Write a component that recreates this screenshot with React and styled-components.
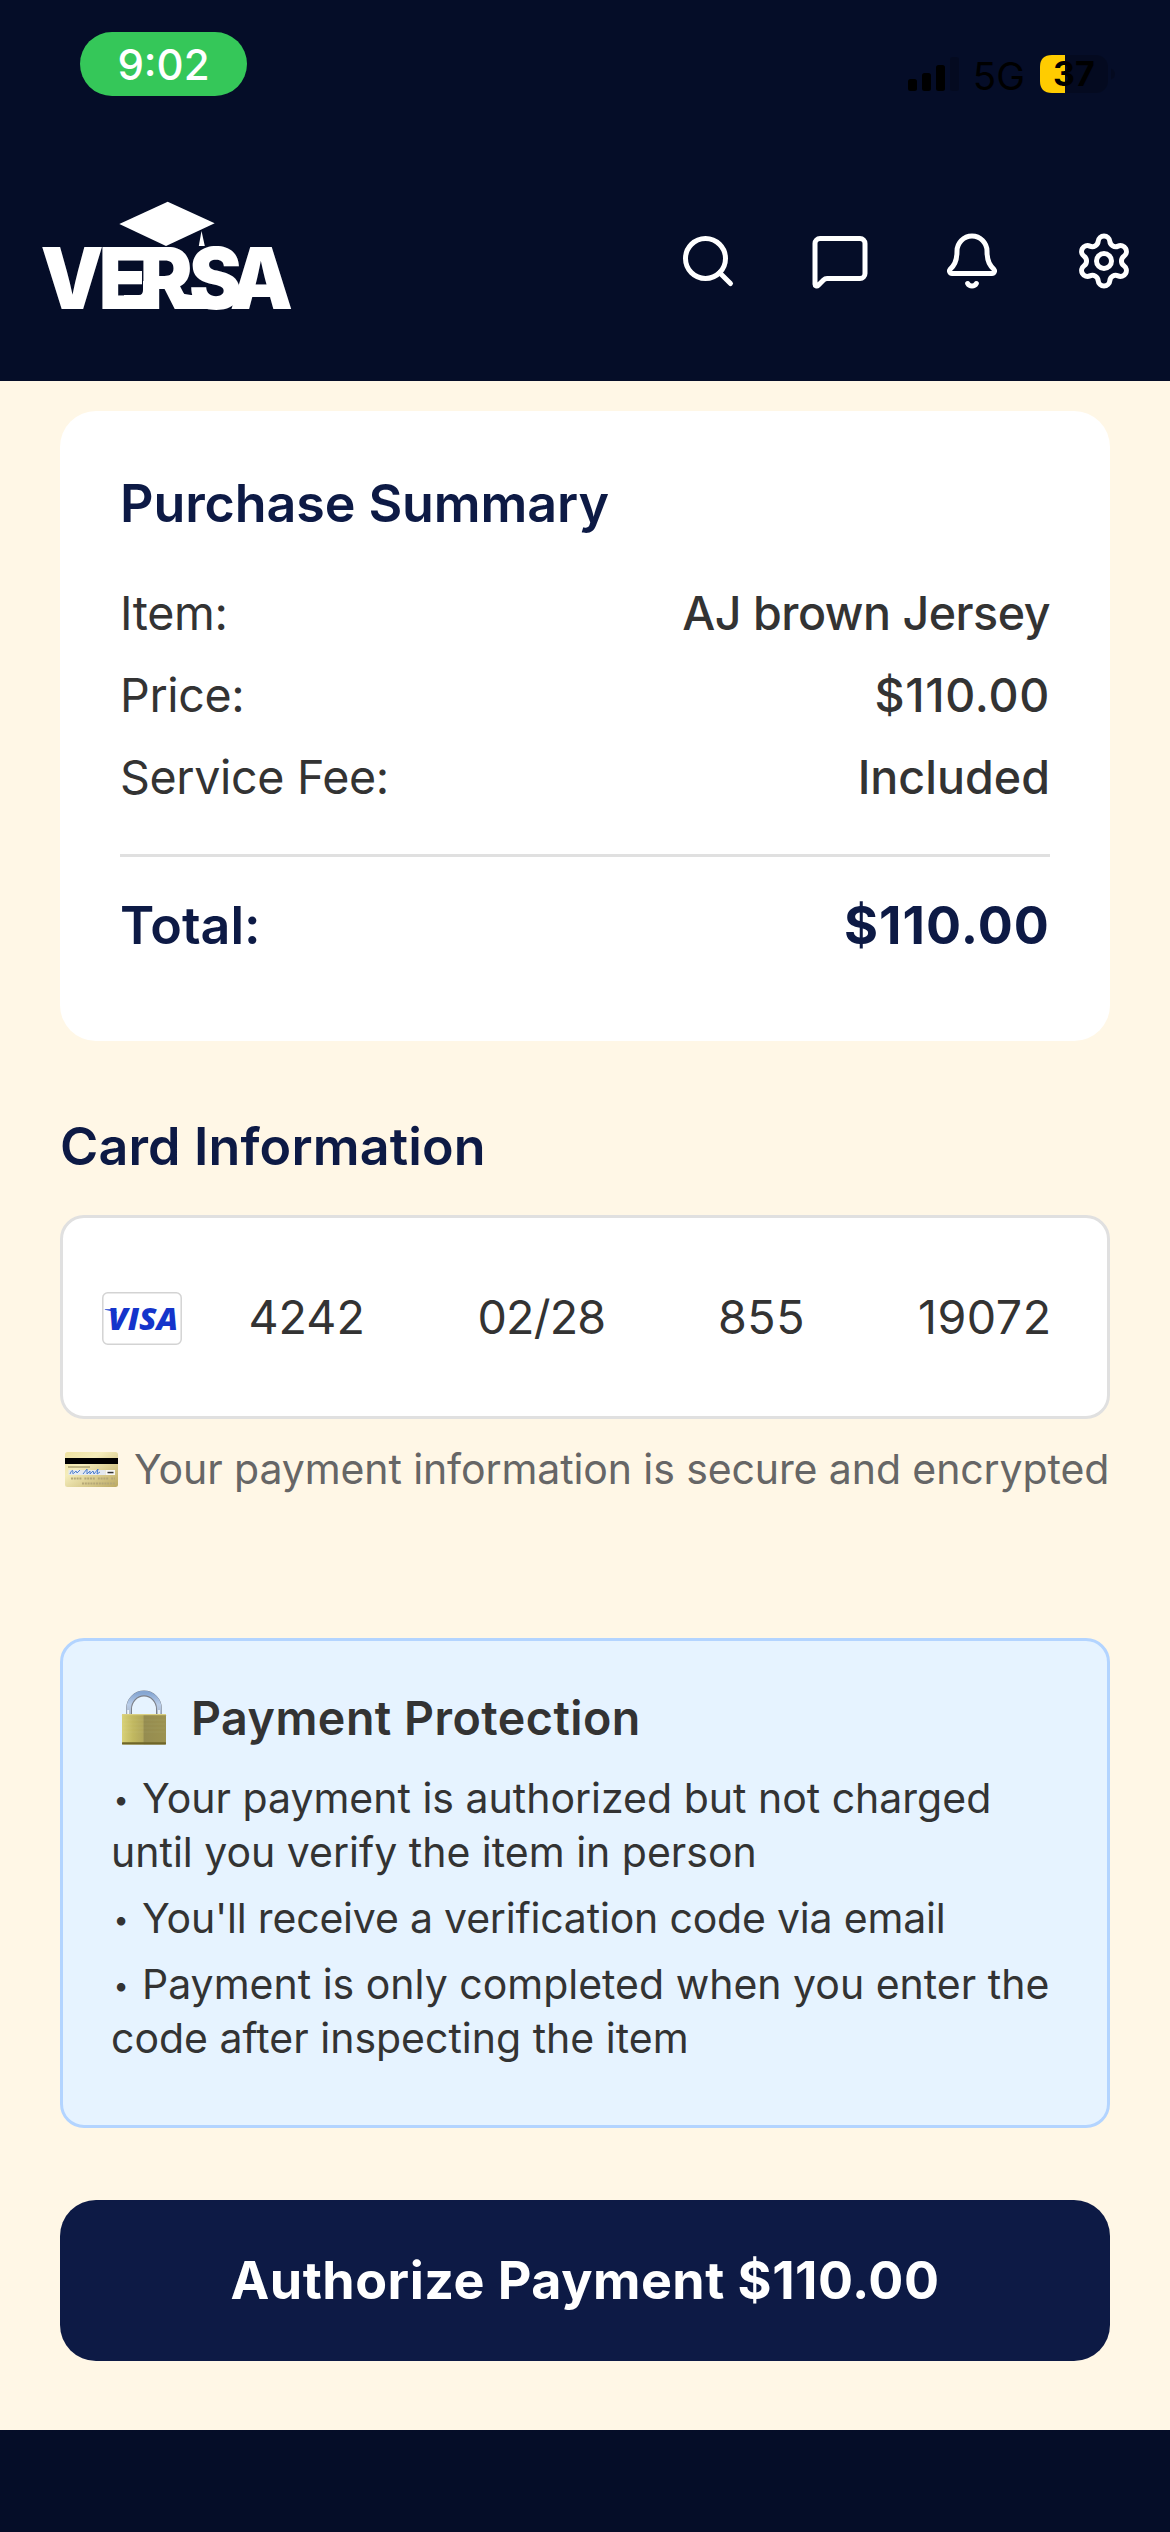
import React from "react";
import styled, { createGlobalStyle } from "styled-components";
import { Search, MessageSquare, Bell, Settings } from "lucide-react";

const navy = "#0d1a45";
const midnight = "#050d28";
const cream = "#fff7e6";
const ink = "#333333";
const rule = "#e0e0e0";

const GlobalStyle = createGlobalStyle`
  *, *::before, *::after { box-sizing: border-box; }
  body {
    margin: 0;
    background: ${midnight};
    font-family: Inter, "Liberation Sans", sans-serif;
    color: ${ink};
  }
`;

const Screen = styled.div`
  display: flex;
  flex-direction: column;
  width: 1170px;
  height: 2532px;
  overflow: hidden;
  background: ${midnight};
`;

const Header = styled.header`
  flex: none;
  height: 381px;
  background: ${midnight};
`;

const StatusBar = styled.div`
  display: flex;
  align-items: center;
  justify-content: space-between;
  height: 128px;
  padding: 0 55px 0 80px;
`;

const ClockPill = styled.span`
  display: flex;
  align-items: center;
  justify-content: center;
  width: 167px;
  height: 64px;
  border-radius: 32px;
  background: #35c759;
  color: #fff;
  font-size: 42px;
  font-weight: 500;
`;

const StatusIcons = styled.div`
  display: flex;
  align-items: center;
  margin-top: 20px;
  color: #000;
`;

const Network = styled.span`
  margin: 4px 15px 0 14px;
  font-size: 38.5px;
  line-height: 46px;
`;

const NavBar = styled.nav`
  display: flex;
  align-items: flex-start;
  justify-content: space-between;
  padding: 73px 36px 0 42px;
`;

const Drawing = styled.svg`
  display: block;
  flex: none;
  overflow: visible;
`;

const NavActions = styled.div`
  display: flex;
  gap: 72px;
  margin-top: 30px;
  color: #fff;
`;

const NavButton = styled.button`
  display: flex;
  width: 60px;
  height: 60px;
  padding: 0;
  border: 0;
  background: none;
  color: inherit;
`;

const Content = styled.main`
  display: flex;
  flex-direction: column;
  flex: none;
  height: 2049px;
  padding: 30px 60px 0;
  background: ${cream};
`;

const SummaryCard = styled.section`
  height: 630px;
  padding: 60px;
  border-radius: 36px;
  background: #fff;
`;

const SectionTitle = styled.h2`
  margin: 0;
  color: ${navy};
  font-size: 52px;
  font-weight: 600;
  line-height: 66px;
  letter-spacing: ${(p) => p.$tracking || "0"};
`;

const Rows = styled.div`
  display: flex;
  flex-direction: column;
  gap: 24px;
  margin-top: 47px;
`;

const Row = styled.div`
  display: flex;
  justify-content: space-between;
  font-size: 46.6px;
  line-height: 58px;
`;

const RowLabel = styled.span`
  letter-spacing: -0.35px;
`;

const RowValue = styled.span`
  font-weight: 500;
  letter-spacing: ${(p) => p.$tracking};
`;

const TotalRow = styled.div`
  display: flex;
  justify-content: space-between;
  margin-top: 48px;
  padding-top: 37px;
  border-top: 3px solid ${rule};
  color: ${navy};
  font-size: 52px;
  font-weight: 600;
  line-height: 64px;
`;

const TotalValue = styled.span`
  font-weight: 700;
  letter-spacing: 1.1px;
`;

const CardSection = styled.section`
  margin-top: 73px;
`;

const CardField = styled.div`
  display: grid;
  grid-template-columns: 146.5px 229px 240.5px 200px 1fr;
  align-items: center;
  height: 204px;
  margin-top: 35px;
  padding-left: 39px;
  border: 3px solid ${rule};
  border-radius: 24px;
  background: #fff;
`;

const CardBrand = styled.span`
  padding-top: 3px;
`;

const CardValue = styled.span`
  font-size: 46.6px;
  line-height: 58px;
  letter-spacing: ${(p) => p.$tracking || "0"};
`;

const SecureNote = styled.p`
  display: flex;
  align-items: center;
  gap: 16px;
  margin: 23px 0 0;
  padding-left: 5px;
  color: #666;
  font-size: 41px;
  line-height: 54px;
  letter-spacing: -0.1px;
  white-space: nowrap;
`;

const Protection = styled.section`
  height: 490px;
  margin-top: 142px;
  padding: 47px 48px 0;
  border: 3px solid #b3d4ff;
  border-radius: 24px;
  background: #e6f3ff;
`;

const ProtectionTitle = styled.h3`
  display: flex;
  align-items: center;
  gap: 25px;
  margin: 0;
  padding-left: 11px;
  font-size: 46.6px;
  font-weight: 600;
  line-height: 60px;
  letter-spacing: 0.47px;
`;

const Points = styled.div`
  display: flex;
  flex-direction: column;
  gap: 12px;
  margin-top: 23px;
`;

const Point = styled.p`
  margin: 0;
  font-size: 41px;
  line-height: 54px;
  letter-spacing: ${(p) => p.$tracking || "0"};
  white-space: nowrap;
`;

const Bullet = styled.span`
  display: inline-block;
  width: 31px;
  padding-left: 2.5px;
  font-size: 27px;
  line-height: 0;
  vertical-align: 4px;
`;

const PayButton = styled.button`
  flex: none;
  height: 161px;
  margin-top: 72px;
  padding: 0;
  border: 0;
  border-radius: 36px;
  background: ${navy};
  color: #fff;
  font-family: inherit;
  font-size: 52px;
  font-weight: 700;
  letter-spacing: 0.5px;
`;

function VersaLogo() {
  return (
    <Drawing width="252" height="110" viewBox="0 0 252 110" fill="#fff">
      <path d="M125.700 0.700 L172.700 22.300 L124 45 L77.300 23 Z" />
      <path d="M159.500 30 L162.800 45 L156.800 45 Z" />
      <text
        x="-1.500 61 105 158 202"
        y="108"
        transform="scale(0.93 1)"
        fontFamily="Inter, sans-serif"
        fontWeight="900"
        fontSize="85.500"
      >
        VERSA
      </text>
      <path d="M82 94 H97 Q101 94 101 89 V80 H115 V96 Q115 108 103 108 H82 Z" />
      <path d="M138 91 Q143 94 149 94 H168 V108 H149 Q140 108 134 103 Z" />
    </Drawing>
  );
}

function SignalBars() {
  return (
    <Drawing width="51" height="34" viewBox="0 0 51 34">
      <rect x="0" y="22" width="9" height="12" rx="2.500" />
      <rect x="14" y="16" width="9" height="18" rx="2.500" />
      <rect x="28" y="8" width="9" height="26" rx="2.500" />
      <rect x="42" y="0" width="9" height="34" rx="2.500" opacity="0.2" />
    </Drawing>
  );
}

function Battery() {
  return (
    <Drawing width="75" height="38" viewBox="0 0 75 38">
      <rect width="68" height="38" rx="12" opacity="0.2" />
      <path d="M12 0 H25 V38 H12 Q0 38 0 26 V12 Q0 0 12 0 Z" fill="#ffcc00" />
      <path d="M71 13.500 Q75 15 75 19 Q75 23 71 24.500 Z" opacity="0.2" />
      <text x="13" y="31" fontFamily="Inter, sans-serif" fontSize="34" fontWeight="700">37</text>
    </Drawing>
  );
}

function VisaBadge() {
  return (
    <Drawing width="80" height="54" viewBox="0 0 80 54">
      <rect x="0.800" y="0.800" width="78.400" height="51.400" rx="5" fill="#fff" stroke="#d3d3d3" strokeWidth="1.500" />
      <path d="M2.800 17.300 H13 L15 21 Q9 18.500 2.800 17.800 Z" fill="#1434cb" />
      <text
        x="6"
        y="38"
        fill="#1434cb"
        fontFamily="'Open Sans', sans-serif"
        fontSize="29.500"
        fontStyle="italic"
        fontWeight="800"
        textLength="70"
        lengthAdjust="spacingAndGlyphs"
      >
        VISA
      </text>
    </Drawing>
  );
}

function CreditCard() {
  return (
    <Drawing width="53" height="35" viewBox="0 0 53 35">
      <defs>
        <linearGradient id="gold" x1="0" y1="0" x2="1" y2="1">
          <stop offset="0" stopColor="#efe2a0" />
          <stop offset="0.350" stopColor="#f5edbb" />
          <stop offset="1" stopColor="#bba860" />
        </linearGradient>
      </defs>
      <rect width="53" height="35" rx="2.500" fill="url(#gold)" />
      <rect y="6" width="53" height="6" fill="#000" />
      <rect x="3" y="14.500" width="22" height="1" fill="#8a8052" />
      <rect x="3.500" y="18" width="37" height="5" fill="#e4e9ef" />
      <rect x="40.500" y="18" width="9.500" height="5" fill="#f7f7f5" />
      <path
        d="M5 22 q2 -5 3 -3 q-1 4 1 2 l2 -2 l1 2 l3 -3 M18 22 l4 -5 l0 5 l3 -3 l0 3 l3 -3 l1 3 l4 -5 l-1 5 l3 -2"
        fill="none"
        stroke="#4d7fd0"
        strokeWidth="1"
      />
      <rect x="42.500" y="19.800" width="6" height="1.500" fill="#333" />
      <path d="M6 26.500 H50" stroke="#b5a878" strokeWidth="2" strokeDasharray="2 0.800 2 0.800 2 0.800 2 3" />
      <path d="M17 31.500 H50" stroke="#b5a878" strokeWidth="2" strokeDasharray="2 0.800" />
    </Drawing>
  );
}

function Padlock() {
  return (
    <Drawing width="44" height="54" viewBox="0 0 44 54">
      <defs>
        <linearGradient id="brass" x1="0" x2="1">
          <stop offset="0" stopColor="#d8d178" />
          <stop offset="0.250" stopColor="#c1b860" />
          <stop offset="0.480" stopColor="#b1a75c" />
          <stop offset="0.500" stopColor="#958c50" />
          <stop offset="1" stopColor="#9c9250" />
        </linearGradient>
        <linearGradient id="steel" x1="0" y1="0" x2="0" y2="1">
          <stop offset="0" stopColor="#86a6d2" />
          <stop offset="0.500" stopColor="#b9cde9" />
          <stop offset="1" stopColor="#a9b4c4" />
        </linearGradient>
      </defs>
      <path d="M7 25 V18 A15 15.500 0 0 1 37 18 V25" fill="none" stroke="#7d8088" strokeWidth="6" />
      <path d="M6.700 25 V18 A15.300 16 0 0 1 37.300 18 V25" fill="none" stroke="url(#steel)" strokeWidth="4.600" />
      <path d="M6.200 24 V19 M37 24 V19" stroke="#eef4fb" strokeWidth="1.800" />
      <rect y="23" width="44" height="30.500" rx="1.200" fill="url(#brass)" />
      <path d="M1 29 H43 M1 33 H43 M1 37 H43 M1 41 H43" stroke="#fff" strokeOpacity="0.060" strokeWidth="1" />
      <rect y="23" width="44" height="1.200" fill="#d9cf83" />
      <rect y="51.300" width="44" height="2.200" rx="0.600" fill="#6f6528" />
    </Drawing>
  );
}

const navIcons = [
  { label: "Search", Icon: Search },
  { label: "Messages", Icon: MessageSquare },
  { label: "Notifications", Icon: Bell },
  { label: "Settings", Icon: Settings },
];

const summary = [
  { label: "Item:", value: "AJ brown Jersey", tracking: "-0.5px" },
  { label: "Price:", value: "$110.00", tracking: "0.7px" },
  { label: "Service Fee:", value: "Included", tracking: "0" },
];

export default function App() {
  return (
    <>
      <GlobalStyle />
      <Screen>
        <Header>
          <StatusBar>
            <ClockPill>9:02</ClockPill>
            <StatusIcons>
              <SignalBars />
              <Network>5G</Network>
              <Battery />
            </StatusIcons>
          </StatusBar>
          <NavBar>
            <VersaLogo />
            <NavActions>
              {navIcons.map(({ label, Icon }) => (
                <NavButton key={label} aria-label={label}>
                  <Icon size={60} strokeWidth={2} />
                </NavButton>
              ))}
            </NavActions>
          </NavBar>
        </Header>

        <Content>
          <SummaryCard>
            <SectionTitle $tracking="-0.1px">Purchase Summary</SectionTitle>
            <Rows>
              {summary.map((row) => (
                <Row key={row.label}>
                  <RowLabel>{row.label}</RowLabel>
                  <RowValue $tracking={row.tracking}>{row.value}</RowValue>
                </Row>
              ))}
            </Rows>
            <TotalRow>
              <span>Total:</span>
              <TotalValue>$110.00</TotalValue>
            </TotalRow>
          </SummaryCard>

          <CardSection>
            <SectionTitle $tracking="0.15px">Card Information</SectionTitle>
            <CardField>
              <CardBrand>
                <VisaBadge />
              </CardBrand>
              <CardValue>4242</CardValue>
              <CardValue $tracking="-0.8px">02/28</CardValue>
              <CardValue $tracking="0.5px">855</CardValue>
              <CardValue $tracking="0.5px">19072</CardValue>
            </CardField>
            <SecureNote>
              <CreditCard />
              Your payment information is secure and encrypted
            </SecureNote>
          </CardSection>

          <Protection>
            <ProtectionTitle>
              <Padlock />
              Payment Protection
            </ProtectionTitle>
            <Points>
              <Point>
                <Bullet>•</Bullet>Your payment is authorized but not charged
                <br />
                until you verify the item in person
              </Point>
              <Point $tracking="-0.19px">
                <Bullet>•</Bullet>You'll receive a verification code via email
              </Point>
              <Point>
                <Bullet>•</Bullet>Payment is only completed when you enter the
                <br />
                code after inspecting the item
              </Point>
            </Points>
          </Protection>

          <PayButton>Authorize Payment $110.00</PayButton>
        </Content>
      </Screen>
    </>
  );
}
